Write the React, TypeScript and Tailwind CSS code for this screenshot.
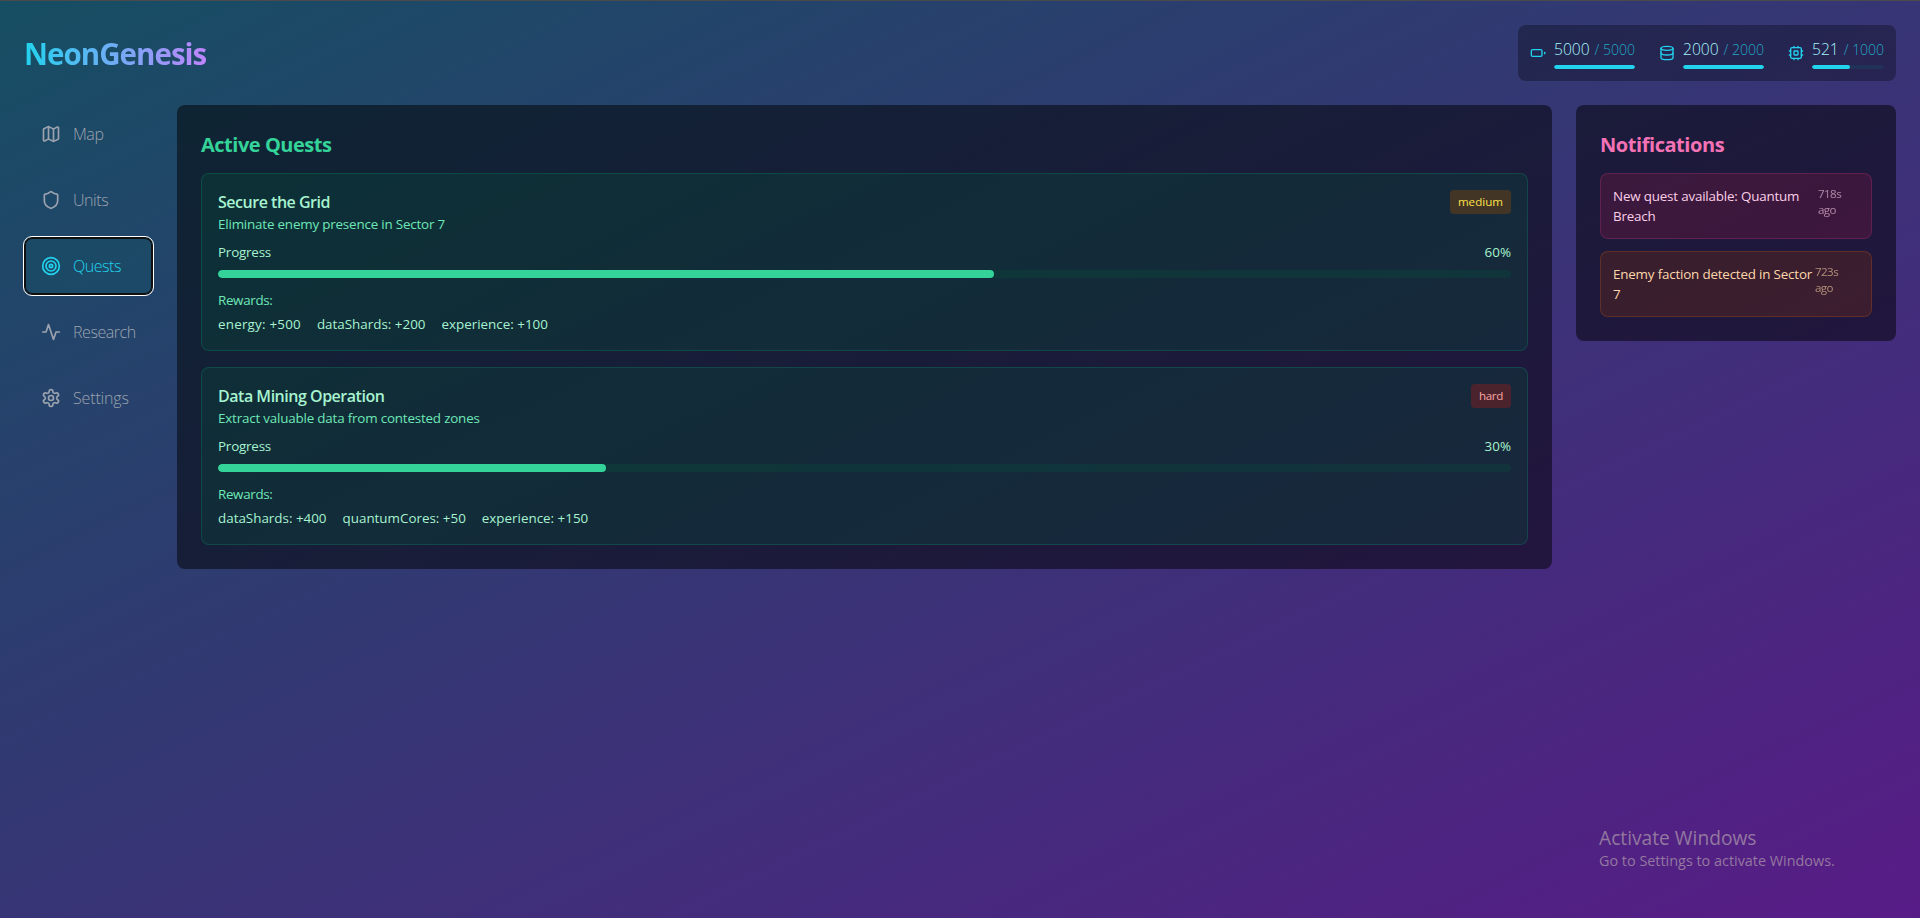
import type { ComponentType, ReactNode } from 'react'
import { Activity, Database, Map, Shield, Target } from 'lucide-react'
import clsx from 'clsx'

interface IconProps {
  size?: number
  className?: string
}

type Icon = ComponentType<IconProps>

interface Resource {
  icon: Icon
  value: number
  max: number
  width: string
}

interface Quest {
  title: string
  description: string
  difficulty: 'medium' | 'hard'
  progress: number
  rewards: [string, number][]
}

function StrokeIcon({ size = 24, className, children }: IconProps & { children: ReactNode }) {
  return (
    <svg
      width={size} height={size} viewBox="0 0 24 24" className={className}
      fill="none" stroke="currentColor" strokeWidth={2} strokeLinecap="round" strokeLinejoin="round"
    >
      {children}
    </svg>
  )
}

function Battery(props: IconProps) {
  return (
    <StrokeIcon {...props}>
      <rect x="2" y="7" width="16" height="10" rx="2" />
      <path d="M22 11v2" />
    </StrokeIcon>
  )
}

function Cpu(props: IconProps) {
  return (
    <StrokeIcon {...props}>
      <rect x="4" y="4" width="16" height="16" rx="2" />
      <rect x="9" y="9" width="6" height="6" rx="1" />
      <path d="M15 2v2M15 20v2M2 15h2M2 9h2M20 15h2M20 9h2M9 2v2M9 20v2" />
    </StrokeIcon>
  )
}

function Gear(props: IconProps) {
  return (
    <StrokeIcon {...props}>
      <path d="M12.22 2h-.44a2 2 0 0 0-2 2v.18a2 2 0 0 1-1 1.73l-.43.25a2 2 0 0 1-2 0l-.15-.08a2 2 0 0 0-2.73.73l-.22.38a2 2 0 0 0 .73 2.73l.15.1a2 2 0 0 1 1 1.72v.51a2 2 0 0 1-1 1.74l-.15.09a2 2 0 0 0-.73 2.73l.22.38a2 2 0 0 0 2.73.73l.15-.08a2 2 0 0 1 2 0l.43.25a2 2 0 0 1 1 1.73V20a2 2 0 0 0 2 2h.44a2 2 0 0 0 2-2v-.18a2 2 0 0 1 1-1.73l.43-.25a2 2 0 0 1 2 0l.15.08a2 2 0 0 0 2.73-.73l.22-.39a2 2 0 0 0-.73-2.73l-.15-.08a2 2 0 0 1-1-1.74v-.5a2 2 0 0 1 1-1.74l.15-.09a2 2 0 0 0 .73-2.73l-.22-.38a2 2 0 0 0-2.73-.73l-.15.08a2 2 0 0 1-2 0l-.43-.25a2 2 0 0 1-1-1.73V4a2 2 0 0 0-2-2z" />
      <circle cx="12" cy="12" r="3" />
    </StrokeIcon>
  )
}

function Pulse(props: IconProps) {
  return (
    <StrokeIcon {...props}>
      <path d="M22 12h-4l-3 9L9 3l-3 9H2" />
    </StrokeIcon>
  )
}

const RESOURCES: Resource[] = [
  { icon: Battery,  value: 5000, max: 5000, width: 'w-[81px]' },
  { icon: Database, value: 2000, max: 2000, width: 'w-[81px]' },
  { icon: Cpu,      value: 521,  max: 1000, width: 'w-[72px]' },
]

const NAV: { icon: Icon; label: string }[] = [
  { icon: Map,    label: 'Map' },
  { icon: Shield, label: 'Units' },
  { icon: Target, label: 'Quests' },
  { icon: Pulse,  label: 'Research' },
  { icon: Gear,   label: 'Settings' },
]

const QUESTS: Quest[] = [
  {
    title: 'Secure the Grid',
    description: 'Eliminate enemy presence in Sector 7',
    difficulty: 'medium',
    progress: 60,
    rewards: [['energy', 500], ['dataShards', 200], ['experience', 100]],
  },
  {
    title: 'Data Mining Operation',
    description: 'Extract valuable data from contested zones',
    difficulty: 'hard',
    progress: 30,
    rewards: [['dataShards', 400], ['quantumCores', 50], ['experience', 150]],
  },
]

const NOTIFICATIONS = [
  {
    text: 'New quest available: Quantum Breach', age: '718s ago', textWidth: 'w-[205px]',
    tone: 'bg-[#831843]/30 border-[#ec4899]/20 text-[#fbcfe8]',
  },
  {
    text: 'Enemy faction detected in Sector 7', age: '723s ago', textWidth: 'w-[202px]',
    tone: 'bg-[#7c2d12]/30 border-[#f97316]/20 text-[#fed7aa]',
  },
]

function ResourceBar() {
  return (
    <div className="flex gap-6 rounded-lg bg-black/30 p-3">
      {RESOURCES.map(({ icon: Icon, value, max, width }) => (
        <div key={value} className="flex items-center gap-2">
          <Icon size={16} className="text-[#22d3ee]" />
          <div className={width}>
            <div className="flex h-6 items-baseline whitespace-nowrap leading-6 font-light text-[#a5f3fc]">
              <span className="text-[15.6px]">{value}</span>
              <span className="ml-[5px] text-[14px] text-[#22d3ee]/75">/ {max}</span>
            </div>
            <div className="mt-1 h-1 overflow-hidden rounded-full bg-[#164e63]/30">
              <div className="h-full rounded-full bg-[#22d3ee]" style={{ width: `${(value / max) * 100}%` }} />
            </div>
          </div>
        </div>
      ))}
    </div>
  )
}

function Sidebar() {
  return (
    <nav className="flex w-[129px] shrink-0 flex-col gap-2">
      {NAV.map(({ icon: Icon, label }) => (
        <button
          key={label}
          className={clsx(
            'flex h-[58px] items-center gap-3 rounded-lg border px-4 font-light',
            label === 'Settings' ? 'tracking-[-0.01em]' : 'tracking-[-0.028em]',
            label === 'Quests'
              ? 'border-[#101010] bg-[#164e63]/50 text-[#22d3ee] shadow-[inset_0_0_0_1px_#101010] outline outline-white'
              : 'border-transparent text-[#9ca3af]',
          )}
        >
          <Icon size={20} className="shrink-0" />
          {label}
        </button>
      ))}
    </nav>
  )
}

function QuestCard({ quest }: { quest: Quest }) {
  return (
    <div className="rounded-lg border border-[#10b981]/20 bg-[#064e3b]/30 p-4 text-[#a7f3d0]">
      <div className="mb-2 flex items-start justify-between">
        <div>
          <h3 className="text-base font-semibold tracking-[-0.03em]">{quest.title}</h3>
          <p className="text-[13.4px] leading-5 tracking-[-0.014em] text-[#6ee7b7]">{quest.description}</p>
        </div>
        <span
          className={clsx(
            'rounded px-2 py-1 text-[11.6px] leading-4',
            quest.difficulty === 'medium' && 'bg-[#713f12]/50 text-[#fde047]',
            quest.difficulty === 'hard' && 'bg-[#7f1d1d]/50 tracking-[-0.03em] text-[#fca5a5]',
          )}
        >
          {quest.difficulty}
        </span>
      </div>
      <div className="mb-2 flex justify-between text-[13.4px] leading-5">
        <span className="tracking-[-0.015em]">Progress</span>
        <span>{quest.progress}%</span>
      </div>
      <div className="h-2 overflow-hidden rounded-full bg-[#064e3b]/30">
        <div className="h-full rounded-full bg-[#34d399]" style={{ width: `${quest.progress}%` }} />
      </div>
      <div className="mt-3 text-[13.4px] leading-5">
        <div className="mb-1 tracking-[-0.025em] text-[#6ee7b7]">Rewards:</div>
        <div className="flex gap-4">
          {quest.rewards.map(([name, amount]) => (
            <span key={name} className={clsx(name === 'energy' && 'tracking-[0.016em]')}>{name}: +{amount}</span>
          ))}
        </div>
      </div>
    </div>
  )
}

export default function App() {
  return (
    <div className="relative h-[918px] overflow-hidden border-t border-[#4a4a4a] bg-linear-to-br/srgb from-[#164e63] to-[#581c87] p-6 font-['Open_Sans','Noto_Sans',sans-serif] text-base">
      <header className="mb-6 flex items-center justify-between">
        <h1 className="bg-linear-to-r/srgb from-[#22d3ee] to-[#c084fc] bg-clip-text pt-0.5 text-[29.5px] leading-9 font-bold tracking-[-0.033em] text-transparent">
          NeonGenesis
        </h1>
        <ResourceBar />
      </header>

      <div className="flex items-start gap-6">
        <Sidebar />

        <main className="flex-1 rounded-lg bg-black/50 p-6">
          <h2 className="mb-3.5 pt-0.5 text-xl font-bold tracking-[-0.024em] text-[#34d399]">Active Quests</h2>
          <div className="space-y-4">
            {QUESTS.map(q => <QuestCard key={q.title} quest={q} />)}
          </div>
        </main>

        <aside className="w-80 shrink-0 rounded-lg bg-black/50 p-6">
          <h2 className="mb-3.5 pt-0.5 text-xl font-bold tracking-[-0.022em] text-[#f472b6]">Notifications</h2>
          <div className="space-y-3">
            {NOTIFICATIONS.map(n => (
              <div key={n.age} className={clsx('flex items-start rounded-lg border p-3', n.tone)}>
                <p className={clsx('shrink-0 text-[13.4px] leading-5 tracking-[-0.014em]', n.textWidth)}>{n.text}</p>
                <span className="w-7 text-[11.6px] leading-4 tracking-[-0.05em] opacity-60">{n.age}</span>
              </div>
            ))}
          </div>
        </aside>
      </div>

      {/* Desktop activation watermark */}
      <div className="absolute left-[1599px] top-[823px] whitespace-nowrap text-[#93789f]">
        <div className="text-[19.2px] leading-7">Activate Windows</div>
        <div className="text-[14.4px] leading-[18px]">Go to Settings to activate Windows.</div>
      </div>
    </div>
  )
}
